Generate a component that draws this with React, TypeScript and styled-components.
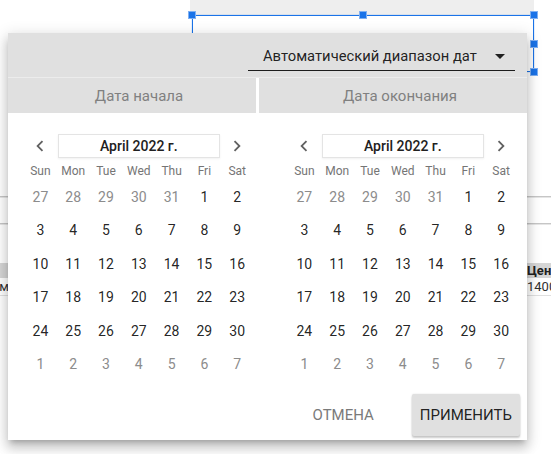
import { createGlobalStyle } from 'styled-components'
import styled from 'styled-components'

const GlobalStyle = createGlobalStyle`
  html, body {
    margin: 0;
    padding: 0;
    background: #ffffff;
    overflow: hidden;
  }
  body {
    font-family: Roboto, 'Noto Sans', Arial, sans-serif;
    color: rgba(0, 0, 0, 0.87);
  }
  * {
    box-sizing: border-box;
  }
`

const Canvas = styled.div`
  position: relative;
  width: 551px;
  height: 454px;
  overflow: hidden;
  background: #ffffff;
`

/* report items behind the popup */
const TopBand = styled.div`
  position: absolute;
  left: 190px;
  top: 0;
  width: 344px;
  height: 15px;
  background: #eeeeee;
`

const Selection = styled.div`
  position: absolute;
  left: 192px;
  top: 15px;
  width: 342px;
  height: 57px;
  border: 1px solid #1a73e8;
  box-shadow: 0 0 1px rgba(26, 115, 232, 0.6);
`

const Handle = styled.span<{ $x: number; $y: number }>`
  position: absolute;
  left: ${({ $x }) => $x - 4}px;
  top: ${({ $y }) => $y - 4}px;
  width: 8px;
  height: 8px;
  background: #1a73e8;
  border: 1px solid #7fb0f2;
`

const Table = styled.div`
  position: absolute;
  left: 0;
  right: 0;
  top: 196px;
  display: flex;
  flex-direction: column;
  font-size: 13px;
`

const Rule = styled.div<{ $gap: number }>`
  height: 2px;
  margin-bottom: ${({ $gap }) => $gap}px;
  background: #c6c6c6;
  border-bottom: 1px solid #e6e6e6;
`

const HeadRow = styled.div`
  height: 15px;
  display: flex;
  justify-content: space-between;
  align-items: center;
  background: #d6d6d6;
  font-weight: 700;
  color: #202020;
`

const DataRow = styled.div`
  height: 18px;
  display: flex;
  justify-content: space-between;
  align-items: flex-start;
  padding-top: 1px;
  border-bottom: 1px solid #e0e0e0;
  color: #303030;
`

const LeftCell = styled.span`
  width: 9px;
  overflow: hidden;
  direction: rtl;
  white-space: nowrap;
`

const RightCell = styled.span`
  width: 24px;
  white-space: nowrap;
`

/* popup */
const Popup = styled.div`
  position: absolute;
  left: 8px;
  top: 33px;
  width: 519px;
  height: 407px;
  background: #ffffff;
  display: flex;
  flex-direction: column;
  box-shadow: 0 5px 5px -3px rgba(0, 0, 0, 0.2), 0 8px 10px 1px rgba(0, 0, 0, 0.14),
    0 3px 14px 2px rgba(0, 0, 0, 0.12);
`

const Header = styled.div`
  height: 45px;
  background: #e0e0e0;
  display: flex;
  justify-content: flex-end;
  align-items: flex-end;
  padding: 0 12px 6px 0;
  border-bottom: 1px solid #ececec;
`

const RangeSelect = styled.div`
  width: 267px;
  height: 28px;
  display: flex;
  align-items: center;
  justify-content: space-between;
  padding: 0 3px 2px 15px;
  border-bottom: 1px solid rgba(0, 0, 0, 0.87);
  font-size: 14.75px;
  color: rgba(0, 0, 0, 0.87);
`

const Tabs = styled.div`
  display: grid;
  grid-template-columns: 248px 1fr;
  column-gap: 3px;
  height: 35px;
  background: #ffffff;
`

const Tab = styled.div`
  background: #e0e0e0;
  display: flex;
  align-items: center;
  justify-content: center;
  padding-left: 14px;
  font-size: 15px;
  color: #808080;
`

const Calendars = styled.div`
  display: flex;
  gap: 34.4px;
  padding: 21px 0 0 16px;
`

const Month = styled.div`
  display: grid;
  grid-template-columns: repeat(7, 32.8px);
`

const Nav = styled.div`
  height: 24px;
  display: flex;
  align-items: center;
  justify-content: center;
  color: #616161;
`

const Title = styled.div`
  grid-column: 2 / 7;
  height: 24px;
  margin: 0 1px;
  display: flex;
  align-items: center;
  justify-content: center;
  font-size: 14px;
  font-weight: 500;
  color: #212121;
  border: 1px solid #e4e4e4;
  box-shadow: 0 1px 2px rgba(0, 0, 0, 0.06);
`

const Weekday = styled.div`
  height: 19px;
  margin-top: 3px;
  display: flex;
  align-items: center;
  justify-content: center;
  font-size: 12px;
  color: #757575;
`

const Day = styled.div<{ $muted?: boolean }>`
  height: 33.5px;
  display: flex;
  align-items: center;
  justify-content: center;
  font-size: 14px;
  color: ${({ $muted }) => ($muted ? '#8c8c8c' : 'rgba(0, 0, 0, 0.87)')};
`

const Footer = styled.div`
  margin-top: auto;
  display: flex;
  justify-content: flex-end;
  align-items: center;
  gap: 22px;
  padding: 0 7px 4px 0;
`

const Button = styled.button<{ $raised?: boolean }>`
  height: 42px;
  padding: 0 ${({ $raised }) => ($raised ? 8 : 16)}px;
  border: none;
  border-radius: 2px;
  font-family: Roboto, Arial, sans-serif;
  font-size: 15px;
  font-weight: 400;
  text-transform: uppercase;
  color: ${({ $raised }) => ($raised ? 'rgba(0, 0, 0, 0.87)' : '#7a7a7a')};
  background: ${({ $raised }) => ($raised ? '#e0e0e0' : 'transparent')};
  box-shadow: ${({ $raised }) =>
    $raised ? '0 2px 2px rgba(0, 0, 0, 0.2), 0 0 2px rgba(0, 0, 0, 0.12)' : 'none'};
`

const ChevronLeft = () => (
  <svg width="22" height="22" viewBox="0 0 24 24" fill="currentColor">
    <path d="M15.41 7.41L14 6l-6 6 6 6 1.41-1.41L10.83 12z" />
  </svg>
)

const ChevronRight = () => (
  <svg width="22" height="22" viewBox="0 0 24 24" fill="currentColor">
    <path d="M8.59 16.59L10 18l6-6-6-6-1.41 1.41L13.17 12z" />
  </svg>
)

const DropArrow = () => (
  <svg width="24" height="24" viewBox="0 0 24 24" fill="#212121">
    <path d="M7 10l5 5 5-5z" />
  </svg>
)

const WEEKDAYS = ['Sun', 'Mon', 'Tue', 'Wed', 'Thu', 'Fri', 'Sat']

// April 2022 starts on Friday, shown with the tail of March and head of May
const DAYS: { n: number; muted: boolean }[] = [
  ...[27, 28, 29, 30, 31].map((n) => ({ n, muted: true })),
  ...Array.from({ length: 30 }, (_, i) => ({ n: i + 1, muted: false })),
  ...[1, 2, 3, 4, 5, 6, 7].map((n) => ({ n, muted: true })),
]

function MonthView() {
  return (
    <Month>
      <Nav>
        <ChevronLeft />
      </Nav>
      <Title>April 2022 г.</Title>
      <Nav>
        <ChevronRight />
      </Nav>
      {WEEKDAYS.map((d) => (
        <Weekday key={d}>{d}</Weekday>
      ))}
      {DAYS.map((d, i) => (
        <Day key={i} $muted={d.muted}>
          {d.n}
        </Day>
      ))}
    </Month>
  )
}

export default function App() {
  return (
    <Canvas>
      <GlobalStyle />
      <TopBand />
      <Selection />
      <Handle $x={192} $y={15} />
      <Handle $x={363} $y={15} />
      <Handle $x={534} $y={15} />
      <Handle $x={534} $y={44} />
      <Handle $x={534} $y={72} />

      <Table>
        <Rule $gap={25} />
        <Rule $gap={38} />
        <HeadRow>
          <LeftCell />
          <RightCell>Цена</RightCell>
        </HeadRow>
        <DataRow>
          <LeftCell>им,</LeftCell>
          <RightCell>1400</RightCell>
        </DataRow>
      </Table>

      <Popup>
        <Header>
          <RangeSelect>
            <span>Автоматический диапазон дат</span>
            <DropArrow />
          </RangeSelect>
        </Header>
        <Tabs>
          <Tab>Дата начала</Tab>
          <Tab>Дата окончания</Tab>
        </Tabs>
        <Calendars>
          <MonthView />
          <MonthView />
        </Calendars>
        <Footer>
          <Button>Отмена</Button>
          <Button $raised>Применить</Button>
        </Footer>
      </Popup>
    </Canvas>
  )
}
